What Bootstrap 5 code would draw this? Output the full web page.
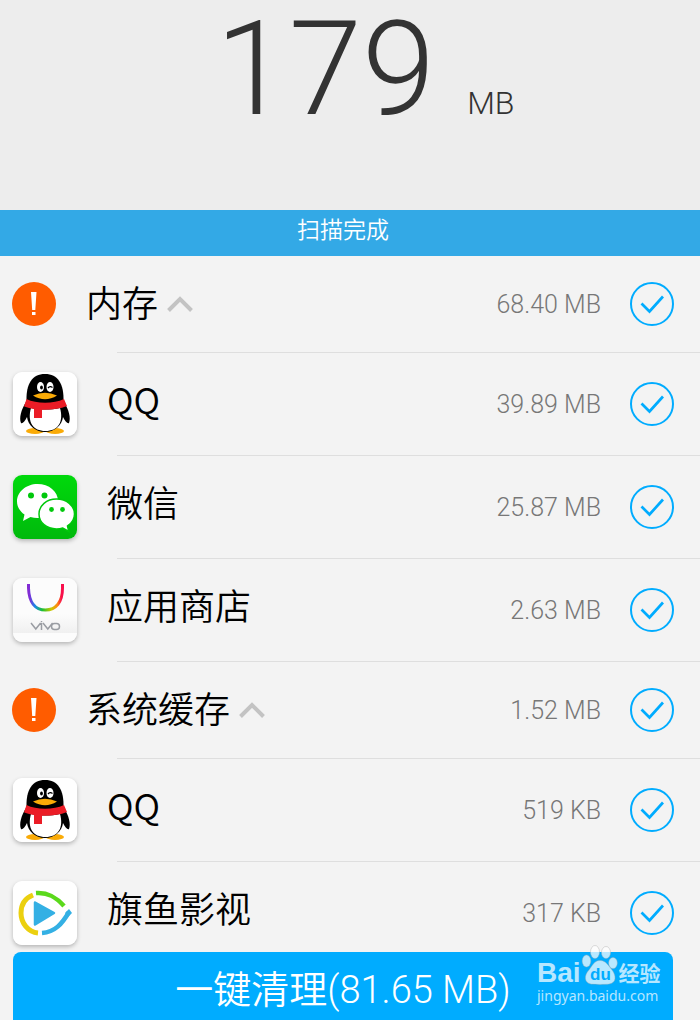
<!DOCTYPE html>
<html lang="zh-CN">
<head>
<meta charset="utf-8">
<meta name="viewport" content="width=device-width, initial-scale=1">
<title>一键清理</title>
<link href="https://cdn.jsdelivr.net/npm/bootstrap@5.3.0/dist/css/bootstrap.min.css" rel="stylesheet">
<style>
  body { background: #f3f3f3; color: #000; font-family: Roboto, "Noto Sans CJK SC", sans-serif; font-weight: 300; }
  .summary { background: #ededed; color: #333; height: 210px; padding-left: 30px; }
  .total { font-size: 132px; line-height: 138px; }
  .total-unit { font-size: 32px; margin-left: 32px; }
  .status-bar { background: #33a9e6; font: 350 23px/36px "Noto Sans CJK SC DemiLight", "Noto Sans CJK SC", sans-serif; height: 46px; padding-right: 14px; }
  .entry { height: 102px; padding: 0 26px 0 13px; }
  .entry.group-head { height: 96px; padding-left: 12px; }
  .divider { margin: 0 0 0 117px; border-top: 1px solid #dedede; opacity: 1; }
  .entry-name { font: 350 36px/48px "Noto Sans CJK SC DemiLight", "Noto Sans CJK SC", sans-serif; }
  .app-name { margin-left: 30px; padding-bottom: 12px; }
  .group-toggle { margin-left: 30px; gap: 9px; color: #000; }
  .group-toggle span { padding-bottom: 6px; }
  .amount { font: 300 25px/32px Roboto, sans-serif; color: #777; margin-right: 29px; padding-top: 2px; }
  .app-icon { width: 64px; height: 64px; border-radius: 9px; box-shadow: 0 2px 4px rgba(0,0,0,.25); }
  .pick.form-check-input { width: 44px; height: 44px; margin: 0; border: 2px solid #00acff; border-radius: 50%; background-color: transparent; box-shadow: none; }
  .pick.form-check-input:checked { background-color: transparent; border-color: #00acff; background-size: 40px 40px; background-position: center;
    background-image: url("data:image/svg+xml,%3Csvg xmlns='http://www.w3.org/2000/svg' viewBox='0 0 40 40'%3E%3Cpath d='M9.500 19.500L17.500 27.500L31 12.500' fill='none' stroke='%2300acff' stroke-width='2.700'/%3E%3C/svg%3E"); }
  .action-bar { height: 68px; padding: 0 27px 0 13px; }
  .clean-btn { background: #00acff; color: #fff; border-radius: 8px 8px 0 0; font: 300 38px/52px Roboto, "Noto Sans CJK SC DemiLight", "Noto Sans CJK SC", sans-serif; padding: 8px 0 0; }
  .watermark { right: 39px; bottom: 14px; width: 124px; color: rgba(255,255,255,.72); pointer-events: none; white-space: nowrap; }
  .wm-latin { font: 700 28px/26px "Liberation Sans", sans-serif; }
  .wm-han { font: 700 21px/28px "Noto Sans CJK SC", sans-serif; }
  .wm-url { font: 400 14px/20px "Noto Sans", sans-serif; }
</style>
</head>
<body class="d-flex flex-column vh-100 overflow-hidden">

<svg class="position-absolute" width="0" height="0" aria-hidden="true" xmlns="http://www.w3.org/2000/svg">
  <defs>
    <linearGradient id="wg" x2="0" y2="1"><stop stop-color="#00d90c"/><stop offset="1" stop-color="#00b90c"/></linearGradient>
    <linearGradient id="rb" gradientUnits="userSpaceOnUse" x1="14" y1="0" x2="51" y2="0"><stop stop-color="#8a28d0"/><stop offset=".08" stop-color="#7a30d8"/><stop offset=".22" stop-color="#168be8"/><stop offset=".42" stop-color="#20c030"/><stop offset=".65" stop-color="#c9c900"/><stop offset=".82" stop-color="#ff8a10"/><stop offset=".93" stop-color="#f80f4c"/></linearGradient>
    <linearGradient id="sh" x2="0" y2="1"><stop stop-color="#fcfcfc"/><stop offset="1" stop-color="#f0f0f0"/></linearGradient>
  </defs>
  <symbol id="alert" viewBox="0 0 44 44">
    <circle cx="22" cy="22" r="22" fill="#ff5c00"/>
    <path d="M19 10h5.500l-1.200 18h-3.100zM20 30h3.500v3H20z" fill="#fff"/>
  </symbol>
  <symbol id="chevron" viewBox="0 0 26 16">
    <path d="M1.500 14.500L13 3l11.500 11.500" fill="none" stroke="#c3c3c3" stroke-width="4"/>
  </symbol>
  <symbol id="qq" viewBox="0 0 64 64">
    <rect width="64" height="64" fill="#fff"/>
    <ellipse cx="22" cy="59" rx="9" ry="3" fill="#faab07"/><ellipse cx="42" cy="59" rx="9" ry="3" fill="#faab07"/>
    <path d="M13 30C8 38 6 46 8 51c1.500 1 4-2 6-6 1 8 8 15 18 15s17-7 18-15c2 4 4.500 7 6 6 2-5 0-13-5-21z"/>
    <path d="M13.500 29C13 12 19 2 32 2s19 10 18.500 27c-10 5-27 5-37 0z"/>
    <path d="M18 36c8 2 20 2 29 0 4 14-2 23-14.500 23S14 50 18 36z" fill="#fff"/>
    <path d="M13.500 27c10 5 27 5 37.500 0l3 7c-7 3-16 4-25 3.700V46h-8v-9c-4-.7-8-1.700-10-2.800z" fill="#eb1c26"/>
    <ellipse cx="27.500" cy="15" rx="3.500" ry="5" fill="#fff"/><ellipse cx="37" cy="15" rx="3.500" ry="5" fill="#fff"/>
    <ellipse cx="28.500" cy="15.500" rx="1.400" ry="2"/>
    <path d="M35 16q2-2.500 4.500-.5" fill="none" stroke="#000" stroke-width="1.300"/>
    <path d="M20 23.500q12-5.500 24 0-12 7.500-24 0z" fill="#faab07"/>
  </symbol>
  <symbol id="wechat" viewBox="0 0 64 64">
    <rect width="64" height="64" fill="url(#wg)"/>
    <path d="M24.500 9C13 9 4 17 4 26.500c0 5.500 3 10 7.500 13L10 46l7.500-4c2.300.7 4.600 1 7 1C36 43 45 35.500 45 26S36 9 24.500 9z" fill="#fff"/>
    <path d="M43.500 24C33.500 24 26 30.500 26 39s7.500 15 17.500 15c2.300 0 4.400-.3 6.300-1l6 3.500-1.300-5.500c4-2.600 7-7 7-12 0-8.500-8-15-18-15z" fill="#fff" stroke="#00c80c" stroke-width="1.500"/>
    <g fill="#00c80c"><circle cx="18" cy="20.500" r="3"/><circle cx="31.500" cy="20.500" r="3"/><circle cx="38.500" cy="34.500" r="2.400"/><circle cx="49.500" cy="34.500" r="2.400"/></g>
  </symbol>
  <symbol id="store" viewBox="0 0 64 64">
    <rect width="64" height="64" fill="#fcfcfc"/><rect y="36" width="64" height="19" fill="url(#sh)"/>
    <path d="M15.500 6v4C16 24 22 32 32.500 32S49.500 24 49.500 10V6" fill="none" stroke="url(#rb)" stroke-width="3"/>
    <path d="M18 45l4.800 6 4.800-6M28.500 45v7M30 45l4.800 6 4.800-6M28.500 43v1.200" fill="none" stroke="#9a9da3" stroke-width="1.500"/>
    <rect x="38.500" y="45.500" width="8" height="6" rx="3" fill="none" stroke="#9a9da3" stroke-width="1.500"/>
  </symbol>
  <symbol id="video" viewBox="0 0 64 64">
    <rect width="64" height="64" fill="#fff"/>
    <path d="M20 14C10 18 8 26 8 32c0 10 7 19 17 20" fill="none" stroke="#ebd00f" stroke-width="5"/>
    <path d="M23 12c12-1 20 4 28 13" fill="none" stroke="#5bd91c" stroke-width="4.500"/>
    <path d="M29 52c13-1 20-9 27-21" fill="none" stroke="#34b0e4" stroke-width="4.500"/><path d="M52 32l4-4 3 4-4 4z" fill="#34b0e4"/>
    <path d="M22 21.500L41 32 22 43.500z" fill="#34b0e4" stroke="#34b0e4" stroke-width="2.500" stroke-linejoin="round"/>
  </symbol>
</svg>

<header class="summary d-flex justify-content-center align-items-baseline flex-shrink-0">
  <span class="total">179</span><span class="total-unit">MB</span>
</header>
<div class="status-bar text-white text-center flex-shrink-0" role="status">扫描完成</div>

<main class="flex-grow-1 overflow-hidden">
  <div class="entry group-head d-flex align-items-center">
    <svg width="44" height="44" aria-hidden="true"><use href="#alert"/></svg>
    <button type="button" class="group-toggle entry-name border-0 bg-transparent d-flex align-items-center p-0 me-auto" aria-expanded="true"><span>内存</span><svg width="26" height="16" aria-hidden="true"><use href="#chevron"/></svg></button>
    <label class="amount" for="p1">68.40 MB</label><input class="pick form-check-input" type="checkbox" id="p1" checked>
  </div>
  <hr class="divider">
  <div class="entry d-flex align-items-center">
    <svg class="app-icon" aria-hidden="true"><use href="#qq"/></svg>
    <span class="entry-name app-name me-auto">QQ</span>
    <label class="amount" for="p2">39.89 MB</label><input class="pick form-check-input" type="checkbox" id="p2" checked>
  </div>
  <hr class="divider">
  <div class="entry d-flex align-items-center">
    <svg class="app-icon" aria-hidden="true"><use href="#wechat"/></svg>
    <span class="entry-name app-name me-auto">微信</span>
    <label class="amount" for="p3">25.87 MB</label><input class="pick form-check-input" type="checkbox" id="p3" checked>
  </div>
  <hr class="divider">
  <div class="entry d-flex align-items-center">
    <svg class="app-icon" aria-hidden="true"><use href="#store"/></svg>
    <span class="entry-name app-name me-auto">应用商店</span>
    <label class="amount" for="p4">2.63 MB</label><input class="pick form-check-input" type="checkbox" id="p4" checked>
  </div>
  <hr class="divider">
  <div class="entry group-head d-flex align-items-center">
    <svg width="44" height="44" aria-hidden="true"><use href="#alert"/></svg>
    <button type="button" class="group-toggle entry-name border-0 bg-transparent d-flex align-items-center p-0 me-auto" aria-expanded="true"><span>系统缓存</span><svg width="26" height="16" aria-hidden="true"><use href="#chevron"/></svg></button>
    <label class="amount" for="p5">1.52 MB</label><input class="pick form-check-input" type="checkbox" id="p5" checked>
  </div>
  <hr class="divider">
  <div class="entry d-flex align-items-center">
    <svg class="app-icon" aria-hidden="true"><use href="#qq"/></svg>
    <span class="entry-name app-name me-auto">QQ</span>
    <label class="amount" for="p6">519 KB</label><input class="pick form-check-input" type="checkbox" id="p6" checked>
  </div>
  <hr class="divider">
  <div class="entry d-flex align-items-center">
    <svg class="app-icon" aria-hidden="true"><use href="#video"/></svg>
    <span class="entry-name app-name me-auto">旗鱼影视</span>
    <label class="amount" for="p7">317 KB</label><input class="pick form-check-input" type="checkbox" id="p7" checked>
  </div>
</main>

<footer class="action-bar position-relative flex-shrink-0">
  <button type="button" class="clean-btn border-0 w-100 h-100">一键清理(81.65 MB)</button>
  <div class="watermark position-absolute">
    <div class="d-flex align-items-end">
      <span class="wm-latin">Bai</span>
      <svg class="flex-shrink-0" width="38" height="42" viewBox="0 0 38 42" aria-hidden="true">
        <g fill="#fff" fill-opacity=".72" stroke="#aaa" stroke-opacity=".4" stroke-width="1">
          <ellipse cx="14" cy="8" rx="4.500" ry="6.500"/><ellipse cx="25" cy="8.500" rx="4.500" ry="6"/>
          <ellipse cx="5.500" cy="17" rx="4.300" ry="6"/><ellipse cx="32" cy="19" rx="4.300" ry="5.500"/>
          <path d="M19 16.500c-6 0-8 6-11 9.500-5 5-5 13 2 14 4 .5 14 .5 18 0 8-1 7-9 3-14-3-3.500-6-9.500-12-9.500z"/>
        </g>
        <text x="9" y="36" font-family="Liberation Sans" font-weight="700" font-size="17" fill="#00acff">du</text>
      </svg>
      <span class="wm-han">经验</span>
    </div>
    <div class="wm-url">jingyan.baidu.com</div>
  </div>
</footer>
<script src="https://cdn.jsdelivr.net/npm/bootstrap@5.3.0/dist/js/bootstrap.bundle.min.js"></script>
</body>
</html>
